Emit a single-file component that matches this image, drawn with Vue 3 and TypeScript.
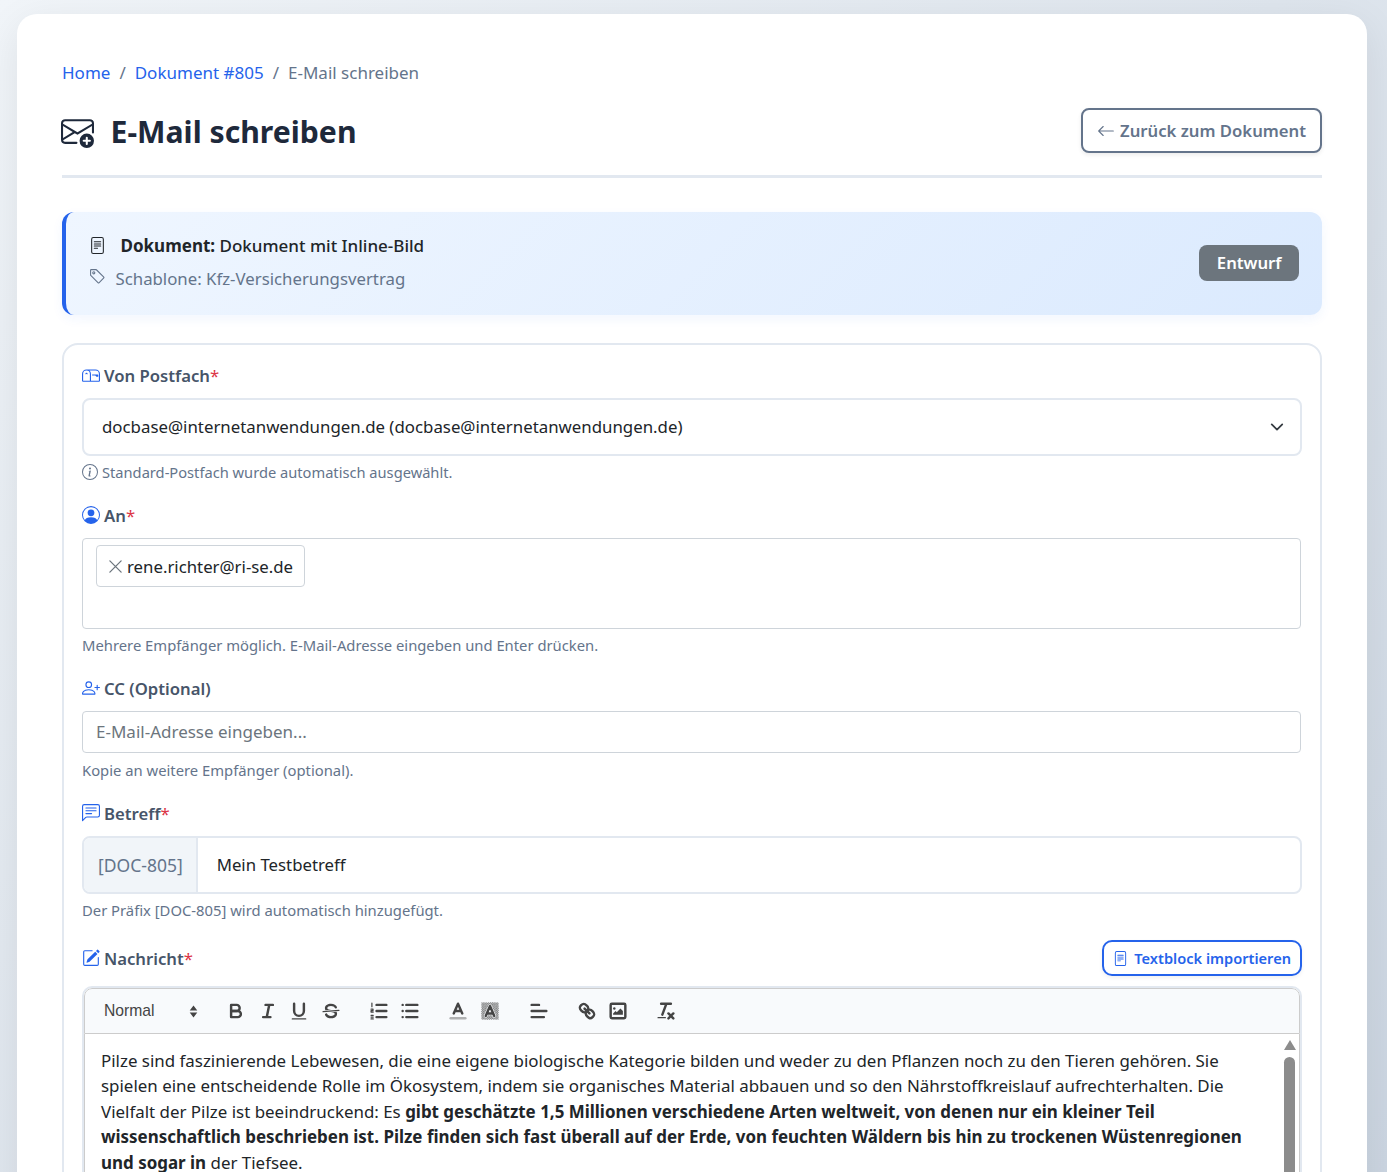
<script setup lang="ts">
// toolbar und formular sind statisch, nur die optik zählt hier
</script>

<template>
  <div class="page">
    <main class="card">
      <nav class="crumbs">
        <a>Home</a><span class="sep">/</span><a>Dokument #805</a><span class="sep">/</span><span>E-Mail schreiben</span>
      </nav>

      <header class="head">
        <h1>
          <svg class="head-icon" viewBox="0 0 16 16" fill="currentColor">
            <path d="M2 2a2 2 0 0 0-2 2v8.01A2 2 0 0 0 2 14h5.5a.5.5 0 0 0 0-1H2a1 1 0 0 1-.966-.741l5.64-3.471L8 9.583l7-4.2V8.5a.5.5 0 0 0 1 0V4a2 2 0 0 0-2-2H2Zm3.708 6.208L1 11.105V5.383l4.708 2.825ZM1 4.217V4a1 1 0 0 1 1-1h12a1 1 0 0 1 1 1v.217l-7 4.2-7-4.2Z" />
            <path d="M16 12.5a3.5 3.5 0 1 1-7 0 3.5 3.5 0 0 1 7 0Zm-3.5-2a.5.5 0 0 0-.5.5v1h-1a.5.5 0 0 0 0 1h1v1a.5.5 0 0 0 1 0v-1h1a.5.5 0 0 0 0-1h-1v-1a.5.5 0 0 0-.5-.5Z" />
          </svg>
          E-Mail schreiben
        </h1>
        <button class="back">
          <svg viewBox="0 0 16 16" fill="currentColor"><path fill-rule="evenodd" d="M15 8a.5.5 0 0 0-.5-.5H2.707l3.147-3.146a.5.5 0 1 0-.708-.708l-4 4a.5.5 0 0 0 0 .708l4 4a.5.5 0 0 0 .708-.708L2.707 8.5H14.5A.5.5 0 0 0 15 8z" /></svg>
          Zurück zum Dokument
        </button>
      </header>

      <section class="info">
        <div class="info-text">
          <div class="info-doc">
            <svg viewBox="0 0 16 16" fill="currentColor">
              <path d="M5 4a.5.5 0 0 0 0 1h6a.5.5 0 0 0 0-1H5zm-.5 2.5A.5.5 0 0 1 5 6h6a.5.5 0 0 1 0 1H5a.5.5 0 0 1-.5-.5zM5 8a.5.5 0 0 0 0 1h6a.5.5 0 0 0 0-1H5zm0 2a.5.5 0 0 0 0 1h3a.5.5 0 0 0 0-1H5z" />
              <path d="M2 2a2 2 0 0 1 2-2h8a2 2 0 0 1 2 2v12a2 2 0 0 1-2 2H4a2 2 0 0 1-2-2V2zm10-1H4a1 1 0 0 0-1 1v12a1 1 0 0 0 1 1h8a1 1 0 0 0 1-1V2a1 1 0 0 0-1-1z" />
            </svg>
            <span><strong>Dokument:</strong> Dokument mit Inline-Bild</span>
          </div>
          <div class="info-tpl">
            <svg viewBox="0 0 16 16" fill="currentColor">
              <path d="M6 4.5a1.5 1.5 0 1 1-3 0 1.5 1.5 0 0 1 3 0zm-1 0a.5.5 0 1 0-1 0 .5.5 0 0 0 1 0z" />
              <path d="M2 1h4.586a1 1 0 0 1 .707.293l7 7a1 1 0 0 1 0 1.414l-4.586 4.586a1 1 0 0 1-1.414 0l-7-7A1 1 0 0 1 1 6.586V2a1 1 0 0 1 1-1zm0 5.586 7 7L13.586 9l-7-7H2v4.586z" />
            </svg>
            <span>Schablone: Kfz-Versicherungsvertrag</span>
          </div>
        </div>
        <span class="badge">Entwurf</span>
      </section>

      <form class="form" @submit.prevent>
        <label class="label">
          <svg viewBox="0 0 16 16" fill="currentColor">
            <path d="M4 4a3 3 0 0 0-3 3v6h6V7a3 3 0 0 0-3-3zm0-1h8a4 4 0 0 1 4 4v6a1 1 0 0 1-1 1H1a1 1 0 0 1-1-1V7a4 4 0 0 1 4-4zm2.646 1A3.99 3.99 0 0 1 8 7v6h7V7a3 3 0 0 0-3-3H6.646z" />
            <path d="M11.793 8.5H9v-1h5a.5.5 0 0 1 .5.5v1a.5.5 0 0 1-.5.5h-1a.5.5 0 0 1-.354-.146l-.853-.854zM5 7c0 .552-.448 0-1 0s-1 .552-1 0a1 1 0 0 1 2 0z" />
          </svg>
          Von Postfach<span class="req">*</span>
        </label>
        <div class="select">
          <span>docbase@internetanwendungen.de (docbase@internetanwendungen.de)</span>
          <svg viewBox="0 0 16 16" fill="none" stroke="#343a40" stroke-width="2" stroke-linecap="round" stroke-linejoin="round"><path d="m2 5 6 6 6-6" /></svg>
        </div>
        <p class="help with-icon">
          <svg viewBox="0 0 16 16" fill="currentColor">
            <path d="M8 15A7 7 0 1 1 8 1a7 7 0 0 1 0 14zm0 1A8 8 0 1 0 8 0a8 8 0 0 0 0 16z" />
            <path d="m8.93 6.588-2.29.287-.082.38.45.083c.294.07.352.176.288.469l-.738 3.468c-.194.897.105 1.319.808 1.319.545 0 1.178-.252 1.465-.598l.088-.416c-.2.176-.492.246-.686.246-.275 0-.375-.193-.304-.533L8.93 6.588zM9 4.5a1 1 0 1 1-2 0 1 1 0 0 1 2 0z" />
          </svg>
          Standard-Postfach wurde automatisch ausgewählt.
        </p>

        <label class="label">
          <svg viewBox="0 0 16 16" fill="currentColor">
            <path d="M11 6a3 3 0 1 1-6 0 3 3 0 0 1 6 0z" />
            <path fill-rule="evenodd" d="M0 8a8 8 0 1 1 16 0A8 8 0 0 1 0 8zm8-7a7 7 0 0 0-5.468 11.37C3.242 11.226 4.805 10 8 10s4.757 1.225 5.468 2.37A7 7 0 0 0 8 1z" />
          </svg>
          An<span class="req">*</span>
        </label>
        <div class="tags">
          <span class="tag">
            <svg viewBox="0 0 16 16" fill="none" stroke="currentColor" stroke-width="1.4" stroke-linecap="round"><path d="m2 2 12 12M14 2 2 14" /></svg>
            rene.richter@ri-se.de
          </span>
        </div>
        <p class="help">Mehrere Empfänger möglich. E-Mail-Adresse eingeben und Enter drücken.</p>

        <label class="label">
          <svg viewBox="0 0 16 16" fill="currentColor">
            <path d="M6 8a3 3 0 1 0 0-6 3 3 0 0 0 0 6zm2-3a2 2 0 1 1-4 0 2 2 0 0 1 4 0zm4 8c0 1-1 1-1 1H1s-1 0-1-1 1-4 6-4 6 3 6 4zm-1-.004c-.001-.246-.154-.986-.832-1.664C9.516 10.68 8.289 10 6 10c-2.29 0-3.516.68-4.168 1.332-.678.678-.83 1.418-.832 1.664h10z" />
            <path fill-rule="evenodd" d="M13.5 5a.5.5 0 0 1 .5.5V7h1.5a.5.5 0 0 1 0 1H14v1.5a.5.5 0 0 1-1 0V8h-1.5a.5.5 0 0 1 0-1H13V5.5a.5.5 0 0 1 .5-.5z" />
          </svg>
          CC (Optional)
        </label>
        <div class="plain-input">E-Mail-Adresse eingeben...</div>
        <p class="help help-cc">Kopie an weitere Empfänger (optional).</p>

        <label class="label">
          <svg viewBox="0 0 16 16" fill="currentColor">
            <path d="M14 1a1 1 0 0 1 1 1v8a1 1 0 0 1-1 1H4.414A2 2 0 0 0 3 11.586l-2 2V2a1 1 0 0 1 1-1h12zM2 0a2 2 0 0 0-2 2v12.793a.5.5 0 0 0 .854.353l2.853-2.853A1 1 0 0 1 4.414 12H14a2 2 0 0 0 2-2V2a2 2 0 0 0-2-2H2z" />
            <path d="M3 3.5a.5.5 0 0 1 .5-.5h9a.5.5 0 0 1 0 1h-9a.5.5 0 0 1-.5-.5zM3 6a.5.5 0 0 1 .5-.5h9a.5.5 0 0 1 0 1h-9A.5.5 0 0 1 3 6zm0 2.5a.5.5 0 0 1 .5-.5h5a.5.5 0 0 1 0 1h-5a.5.5 0 0 1-.5-.5z" />
          </svg>
          Betreff<span class="req">*</span>
        </label>
        <div class="group">
          <span class="prefix">[DOC-805]</span>
          <span class="group-value">Mein Testbetreff</span>
        </div>
        <p class="help">Der Präfix [DOC-805] wird automatisch hinzugefügt.</p>

        <div class="msg-head">
          <label class="label">
            <svg viewBox="0 0 16 16" fill="currentColor">
              <path d="M15.502 1.94a.5.5 0 0 1 0 .706L14.459 3.69l-2-2L13.502.646a.5.5 0 0 1 .707 0l1.293 1.293zm-1.75 2.456-2-2L4.939 9.21a.5.5 0 0 0-.121.196l-.805 2.414a.25.25 0 0 0 .316.316l2.414-.805a.5.5 0 0 0 .196-.12l6.813-6.814z" />
              <path fill-rule="evenodd" d="M1 13.5A1.5 1.5 0 0 0 2.5 15h11a1.5 1.5 0 0 0 1.5-1.5v-6a.5.5 0 0 0-1 0v6a.5.5 0 0 1-.5.5h-11a.5.5 0 0 1-.5-.5v-11a.5.5 0 0 1 .5-.5H9a.5.5 0 0 0 0-1H2.5A1.5 1.5 0 0 0 1 2.5v11z" />
            </svg>
            Nachricht<span class="req">*</span>
          </label>
          <button class="import">
            <svg viewBox="0 0 16 16" fill="currentColor">
              <path d="M5 4a.5.5 0 0 0 0 1h6a.5.5 0 0 0 0-1H5zm-.5 2.5A.5.5 0 0 1 5 6h6a.5.5 0 0 1 0 1H5a.5.5 0 0 1-.5-.5zM5 8a.5.5 0 0 0 0 1h6a.5.5 0 0 0 0-1H5zm0 2a.5.5 0 0 0 0 1h3a.5.5 0 0 0 0-1H5z" />
              <path d="M2 2a2 2 0 0 1 2-2h8a2 2 0 0 1 2 2v12a2 2 0 0 1-2 2H4a2 2 0 0 1-2-2V2zm10-1H4a1 1 0 0 0-1 1v12a1 1 0 0 0 1 1h8a1 1 0 0 0 1-1V2a1 1 0 0 0-1-1z" />
            </svg>
            Textblock importieren
          </button>
        </div>

        <div class="editor">
          <div class="toolbar">
            <div class="picker">
              <span>Normal</span>
              <svg viewBox="0 0 8 12" fill="#444"><path d="M4 .5 7.5 5H.5zM4 11.5.5 7h7z" /></svg>
            </div>
            <div class="tb-group">
              <svg viewBox="0 0 18 18" class="q">
                <path d="M5,4H9.5A2.5,2.5,0,0,1,12,6.5v0A2.5,2.5,0,0,1,9.5,9H5A0,0,0,0,1,5,9V4A0,0,0,0,1,5,4Z" />
                <path d="M5,9h5.5A2.5,2.5,0,0,1,13,11.5v0A2.5,2.5,0,0,1,10.5,14H5a0,0,0,0,1,0,0V9A0,0,0,0,1,5,9Z" />
              </svg>
              <svg viewBox="0 0 18 18" class="q">
                <path d="M7 4h6M5 14h6M8 14l2-10" />
              </svg>
              <svg viewBox="0 0 18 18" class="q">
                <path d="M5,3V9a4.012,4.012,0,0,0,4,4H9a4.012,4.012,0,0,0,4-4V3" />
                <rect class="f" height="1" rx=".5" ry=".5" width="12" x="3" y="15" />
              </svg>
              <svg viewBox="0 0 18 18" class="q">
                <path class="thin" d="M15.5 8.5 2.5 9.5" />
                <path class="f" d="M9.007,8C6.542,7.791,6,7.519,6,6.5,6,5.792,7.283,5,9,5c1.571,0,2.765.679,2.969,1.309a1,1,0,0,0,1.9-.617C13.356,4.106,11.354,3,9,3,6.2,3,4,4.538,4,6.5a3.2,3.2,0,0,0,.5,1.843Z" />
                <path class="f" d="M8.984,10C11.457,10.208,12,10.479,12,11.5c0,.708-1.283,1.5-3,1.5-1.571,0-2.765-.679-2.969-1.309a1,1,0,1,0-1.9.617C4.644,13.894,6.646,15,9,15c2.8,0,5-1.538,5-3.5a3.2,3.2,0,0,0-.5-1.843Z" />
              </svg>
            </div>
            <div class="tb-group">
              <svg viewBox="0 0 18 18" class="q">
                <path d="M7 4h8M7 9h8M7 14h8" />
                <path class="thin" d="M3.2 2.5v3M2.5 7.5h1.6v1.2h-1.6v1.2h1.8M2.5 12.5h1.8M2.5 14h1.8M2.5 15.5h1.8" />
              </svg>
              <svg viewBox="0 0 18 18" class="q">
                <path d="M6 4h9M6 9h9M6 14h9M3 4h0M3 9h0M3 14h0" />
              </svg>
            </div>
            <div class="tb-group">
              <svg viewBox="0 0 18 18" class="q">
                <path class="label-line" d="M3 15h12" />
                <path d="M5.5 11 9 3l3.5 8M11.63 9H6.38" />
              </svg>
              <svg viewBox="0 0 18 18" class="q">
                <defs>
                  <pattern id="dither" width="1.8" height="1.8" patternUnits="userSpaceOnUse">
                    <rect width=".9" height=".9" fill="#444" stroke="none" />
                    <rect x=".9" y=".9" width=".9" height=".9" fill="#444" stroke="none" />
                  </pattern>
                </defs>
                <rect class="nostroke" x="2" y="2" width="14" height="14" fill="url(#dither)" />
                <path class="halo" d="M5.5 13 9 5l3.5 8M11.63 11H6.38" />
                <path d="M5.5 13 9 5l3.5 8M11.63 11H6.38" />
              </svg>
            </div>
            <div class="tb-group">
              <svg viewBox="0 0 18 18" class="q">
                <path d="M3 9h12M3 14h10M3 4h6" />
              </svg>
            </div>
            <div class="tb-group">
              <svg viewBox="0 0 18 18" class="q">
                <path d="M7 7l4 4" />
                <path d="M8.9,4.577a3.476,3.476,0,0,1,.36,4.679A3.476,3.476,0,0,1,4.577,8.9C3.185,7.5,2.035,6.4,4.217,4.217S7.5,3.185,8.9,4.577Z" />
                <path d="M13.423,9.1a3.476,3.476,0,0,0-4.679-.36,3.476,3.476,0,0,0,.36,4.679c1.392,1.392,2.5,2.542,4.679.36S14.815,10.5,13.423,9.1Z" />
              </svg>
              <svg viewBox="0 0 18 18" class="q">
                <rect x="3" y="3" width="12" height="12" rx="1" ry="1" />
                <circle class="f" cx="6" cy="7" r="1" />
                <polygon class="f" points="5 12 5 11 7 9 8 10 11 7 13 9 13 12 5 12" />
              </svg>
            </div>
            <div class="tb-group">
              <svg viewBox="0 0 18 18" class="q">
                <path d="M5 3h8M6 12 9.35 3M11 11l4 4M15 11l-4 4" />
                <rect class="f" height="1" rx=".5" width="7" x="2" y="14" />
              </svg>
            </div>
          </div>
          <div class="editor-body">
            <div class="editor-text">
              Pilze sind faszinierende Lebewesen, die eine eigene biologische Kategorie bilden und weder zu den Pflanzen noch zu den Tieren gehören. Sie spielen eine entscheidende Rolle im Ökosystem, indem sie organisches Material abbauen und so den Nährstoffkreislauf aufrechterhalten. Die Vielfalt der Pilze ist beeindruckend: Es <strong>gibt geschätzte 1,5 Millionen verschiedene Arten weltweit, von denen nur ein kleiner Teil wissenschaftlich beschrieben ist. Pilze finden sich fast überall auf der Erde, von feuchten Wäldern bis hin zu trockenen Wüstenregionen und sogar in</strong> der Tiefsee.
            </div>
            <div class="scroll">
              <span class="scroll-up"></span>
              <span class="scroll-thumb"></span>
            </div>
          </div>
        </div>
      </form>
    </main>
  </div>
</template>

<style>
html,
body {
  height: 100%;
  margin: 0;
  overflow: hidden;
}
</style>

<style scoped>
.page {
  box-sizing: border-box;
  height: 1172px;
  overflow: hidden;
  padding: 14px 20px 0 17px;
  background: linear-gradient(135deg, #f1f5f9 0%, #cbd5e1 100%);
  font-family: "Noto Sans", sans-serif;
  color: #212529;
}

.card {
  background: #fff;
  border-radius: 20px;
  padding: 44px 45px 40px;
  height: 1300px;
  box-sizing: border-box;
  box-shadow: 0 10px 40px rgba(0, 0, 0, 0.08);
}

.crumbs {
  display: flex;
  align-items: center;
  height: 28px;
  font-size: 17px;
  color: #64748b;
}

.crumbs a {
  color: #2563eb;
}

.sep {
  margin: 0 9px;
}

.head {
  display: flex;
  justify-content: space-between;
  align-items: flex-start;
  margin-top: 22px;
  padding-bottom: 22px;
  border-bottom: 3px solid #e2e8f0;
}

h1 {
  display: flex;
  align-items: center;
  gap: 16.5px;
  margin: 0 0 -2px -1px;
  font-size: 30.2px;
  line-height: 47px;
  font-weight: 700;
  color: #1e293b;
}

.head-icon {
  width: 33px;
  height: 33px;
}

.back {
  display: flex;
  align-items: center;
  gap: 5px;
  height: 45px;
  padding: 0 14px;
  box-sizing: border-box;
  background: #fff;
  border: 2px solid #64748b;
  border-radius: 8px;
  box-shadow: 0 2px 4px rgba(0, 0, 0, 0.08);
  color: #64748b;
  font: 600 16.7px "Noto Sans", sans-serif;
}

.back svg {
  width: 18px;
  height: 18px;
}

.info {
  display: flex;
  justify-content: space-between;
  align-items: center;
  box-sizing: border-box;
  height: 103px;
  margin-top: 34px;
  padding: 0 23px 1px;
  background: linear-gradient(135deg, #eff6ff 0%, #dbeafe 100%);
  border-left: 4px solid #2563eb;
  border-radius: 12px;
  box-shadow: 0 4px 12px rgba(37, 99, 235, 0.06);
}

.info-text {
  position: relative;
  top: -1px;
}

.info-doc,
.info-tpl {
  display: flex;
  align-items: center;
  font-size: 17px;
  line-height: 33px;
}

.info-doc {
  font-weight: 500;
}

.info-doc svg {
  width: 17px;
  height: 17px;
  margin-right: 14.5px;
  color: #212529;
}

.info-tpl {
  color: #64748b;
  font-size: 16.8px;
}

.info-tpl svg {
  width: 17px;
  height: 17px;
  margin-right: 9.5px;
  position: relative;
  top: -2px;
}

.badge {
  background: #6c757d;
  color: #fff;
  font-size: 16.7px;
  font-weight: 600;
  line-height: 36px;
  padding: 0 17.5px;
  border-radius: 8px;
}

.form {
  margin-top: 28px;
  padding: 16px 18px 0;
  border: 2px solid #e2e8f0;
  border-radius: 16px;
}

.label {
  display: flex;
  align-items: center;
  gap: 4px;
  height: 28px;
  font-size: 16.7px;
  font-weight: 600;
  color: #475569;
}

.label svg {
  width: 18px;
  height: 18px;
  color: #2563eb;
}

.req {
  color: #dc3545;
  margin-left: -4px;
  font-weight: 400;
}

.select {
  display: flex;
  justify-content: space-between;
  align-items: center;
  box-sizing: border-box;
  height: 58px;
  margin-top: 9px;
  padding: 0 16px 2px 18px;
  border: 2px solid #e2e8f0;
  border-radius: 8px;
  font-size: 16.83px;
}

.select svg {
  width: 14px;
  height: 14px;
  position: relative;
  top: 1px;
}

.help {
  margin: 5px 0 0;
  font-size: 14.8px;
  line-height: 22px;
  color: #64748b;
}

.help-cc {
  margin-top: 6px;
}

.with-icon {
  display: flex;
  align-items: center;
  gap: 4px;
  font-size: 14.67px;
}

.with-icon svg {
  width: 16px;
  height: 16px;
}

.help + .label {
  margin-top: 18px;
}

.tags {
  box-sizing: border-box;
  height: 91px;
  margin: 9px 1px 0 0;
  padding: 6px 13px;
  border: 1px solid #ced4da;
  border-radius: 4px;
}

.tag {
  display: inline-flex;
  align-items: center;
  gap: 4px;
  box-sizing: border-box;
  height: 42px;
  padding: 0 11px;
  border: 1px solid #ced4da;
  border-radius: 4px;
  font-size: 16.8px;
}

.tag svg {
  width: 15px;
  height: 15px;
  color: #6c757d;
}

.plain-input {
  box-sizing: border-box;
  height: 42px;
  margin: 9px 1px 0 0;
  padding: 0 13px;
  border: 1px solid #ced4da;
  border-radius: 4px;
  font-size: 17px;
  line-height: 40px;
  color: #6c757d;
}

.group {
  display: flex;
  box-sizing: border-box;
  height: 58px;
  margin-top: 9px;
  border: 2px solid #e2e8f0;
  border-radius: 8px;
  font-size: 16.8px;
  line-height: 54px;
  overflow: hidden;
}

.prefix {
  padding: 0 13px 0 14px;
  background: #f1f5f9;
  border-right: 2px solid #e2e8f0;
  color: #64748b;
  font-size: 17.5px;
}

.group-value {
  padding: 0 19px;
}

.msg-head {
  display: flex;
  justify-content: space-between;
  align-items: center;
  margin-top: 19px;
}

.import {
  display: flex;
  align-items: center;
  gap: 6px;
  height: 36px;
  padding: 0 9px;
  box-sizing: border-box;
  background: #fff;
  border: 2px solid #2563eb;
  border-radius: 10px;
  box-shadow: 0 2px 4px rgba(0, 0, 0, 0.06);
  color: #2563eb;
  font: 600 14.6px "Noto Sans", sans-serif;
}

.import svg {
  width: 15px;
  height: 15px;
}

.editor {
  margin-top: 10px;
  border: 2px solid #e2e8f0;
  border-radius: 10px 10px 0 0;
  overflow: hidden;
}

.toolbar {
  display: flex;
  align-items: center;
  box-sizing: border-box;
  height: 46px;
  padding-left: 19px;
  background: #f8fafc;
  border: 1px solid #ccc;
  border-radius: 8px 8px 0 0;
}

.picker {
  display: flex;
  justify-content: space-between;
  align-items: center;
  width: 94px;
  margin-right: 27px;
  font: 500 15.7px "Liberation Sans", sans-serif;
  color: #444;
}

.picker svg {
  width: 9px;
  height: 13px;
}

.tb-group {
  display: flex;
  gap: 9.5px;
  margin-right: 26px;
}

.tb-group:nth-child(5) {
  margin-left: 1px;
}

.q {
  width: 22px;
  height: 22px;
  fill: none;
  stroke: #444;
  stroke-width: 2;
  stroke-linecap: round;
  stroke-linejoin: round;
}

.q .f {
  fill: #444;
  stroke: none;
}

.q .thin {
  stroke-width: 1;
}

.q .label-line {
  stroke-opacity: 0.4;
}

.q .nostroke {
  stroke: none;
}

.q .halo {
  stroke: #f8fafc;
  stroke-width: 3;
}

.editor-body {
  display: flex;
  border: 1px solid #ccc;
  border-top: 0;
  height: 200px;
}

.editor-text {
  flex: 1;
  padding: 13.7px 0 0 16px;
  margin-right: 34px;
  font-size: 16.92px;
  line-height: 25.5px;
}

.editor-text strong {
  font-size: 16.96px;
}

.scroll {
  display: flex;
  flex-direction: column;
  align-items: center;
  width: 13px;
  margin-right: 3px;
  padding-top: 6px;
}

.scroll-up {
  width: 0;
  height: 0;
  border-left: 6.5px solid transparent;
  border-right: 6.5px solid transparent;
  border-bottom: 10px solid #8c8c8c;
}

.scroll-thumb {
  flex: 1;
  width: 11px;
  margin-top: 7px;
  background: #8c8c8c;
  border-radius: 6px 6px 0 0;
}
</style>
